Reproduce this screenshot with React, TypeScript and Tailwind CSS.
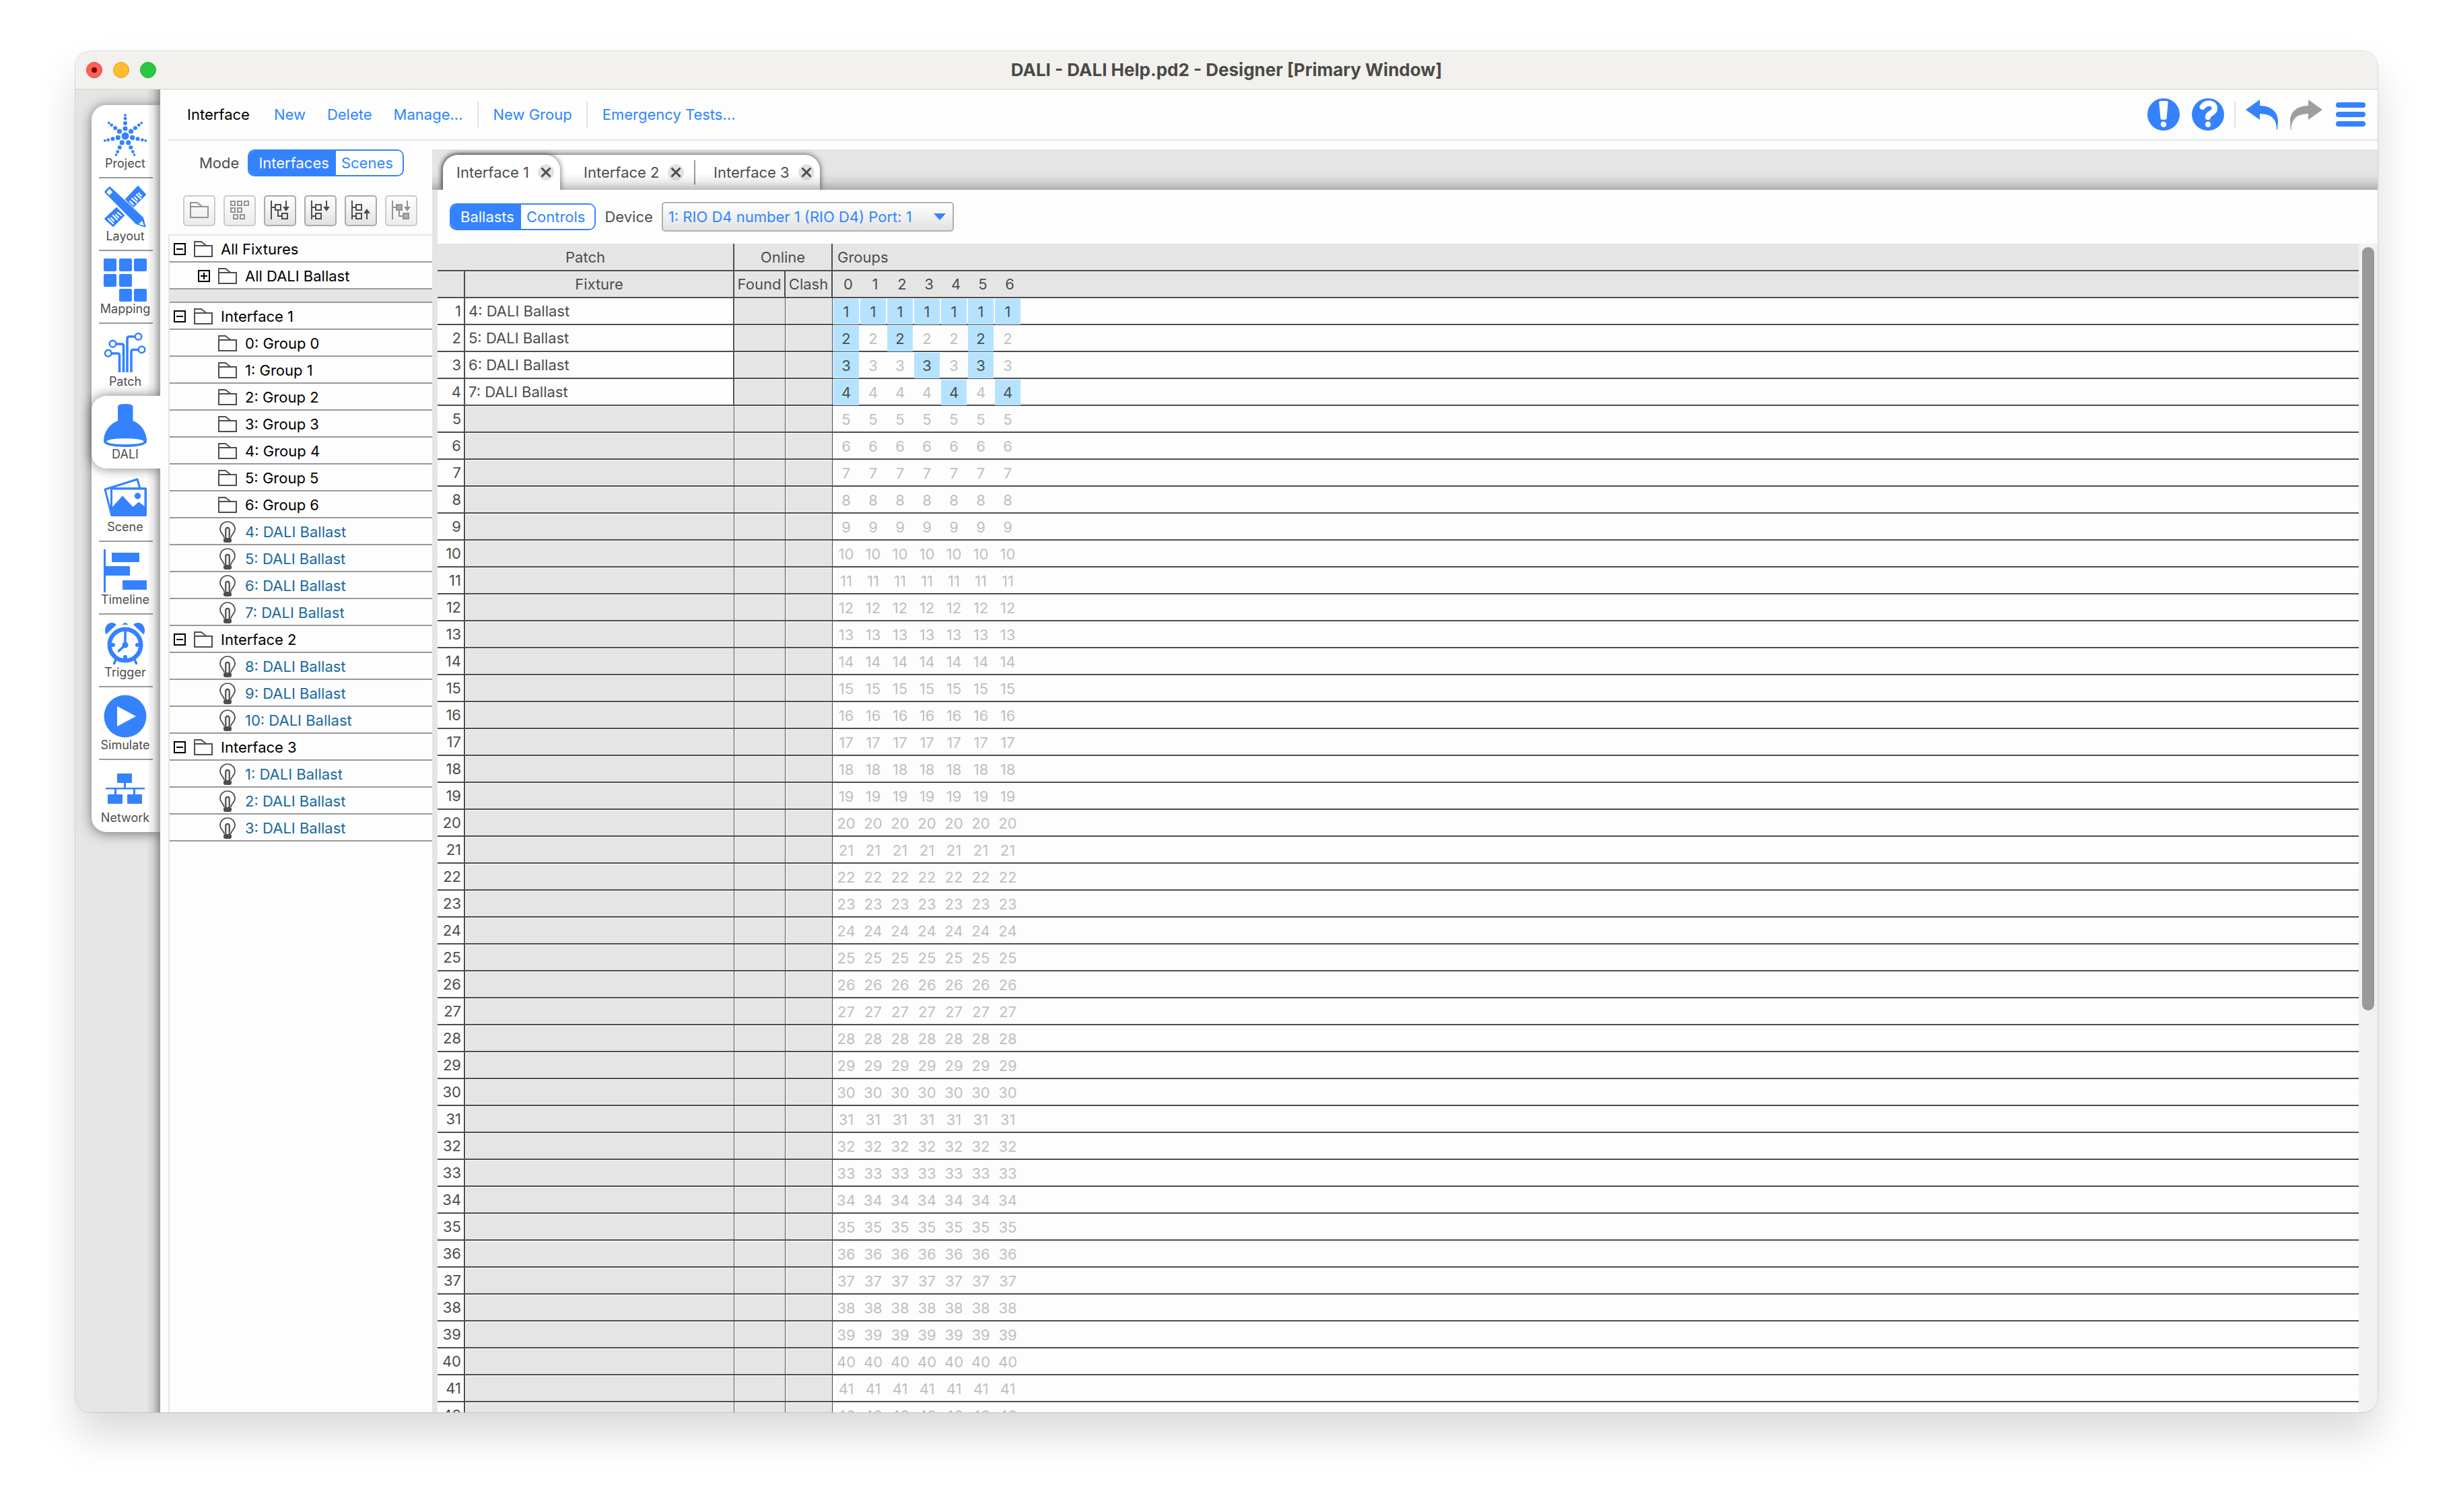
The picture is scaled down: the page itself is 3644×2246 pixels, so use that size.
import type { ReactNode } from "react"

const BLUE = "#3582ff"
const INK = "#4d4d4d"

const STAR_DOTS = [
  { distance: 11, r: 3.6 },
  { distance: 19, r: 3 },
  { distance: 26, r: 2.4 },
  { distance: 31, r: 1.9 },
]

const star = (
  <g fill={BLUE}>
    <circle cx="32" cy="34" r="5.5" />
    {[0, 1, 2, 3, 4, 5, 6].map((arm) =>
      STAR_DOTS.map((dot) => {
        const angle = (arm * 2 * Math.PI) / 7
        return (
          <circle
            key={`${arm}-${dot.distance}`}
            cx={32 + dot.distance * Math.sin(angle)}
            cy={34 - dot.distance * Math.cos(angle)}
            r={dot.r}
          />
        )
      }),
    )}
  </g>
)

const layout = (
  <>
    <g fill={BLUE} stroke={BLUE} strokeWidth="2" strokeLinejoin="round">
      <path d="M51 1L62 13L44 31L33 20Z" />
      <path d="M19 33L30 44L14 60L2 49Z" />
    </g>
    <g stroke="#fff" strokeWidth="2.2" strokeLinecap="round">
      <path d="M39 23L44 28M42 19L49 25M46 17L50 21M49 13L55 19M52 11L56 15" />
      <path d="M7 49L14 56M11 48L15 52M14 44L20 50M18 43L22 47M21 40L26 44" />
    </g>
    <path
      d="M8 1Q9 0 10.500 1.500L59.500 47L63 60.500Q63 62.500 61 62L48 57.500L1.500 10.500Q0 9 1.500 7.500Z"
      fill={BLUE}
      stroke="#fff"
      strokeWidth="1"
    />
    <path d="M9 4.500L13 9.500L8.500 14L4 9.500Z" fill="#fff" />
    <path d="M52 57L57 52L60 59Z" fill="#fff" />
  </>
)

const mapping = (
  <g fill={BLUE}>
    <rect width="19" height="19" rx="2" />
    <rect x="23" width="19" height="19" rx="2" />
    <rect x="45" width="19" height="19" rx="2" />
    <rect y="23" width="19" height="19" rx="2" />
    <rect x="23" y="23" width="19" height="19" rx="2" />
    <rect x="23" y="45" width="19" height="19" rx="2" />
    <rect x="45" y="45" width="19" height="19" rx="2" />
  </g>
)

const patch = (
  <g fill="none" stroke={BLUE} strokeWidth="3.600">
    <circle cx="51.500" cy="8" r="4.800" strokeWidth="2.600" />
    <circle cx="13.500" cy="18.700" r="4.800" strokeWidth="2.600" />
    <circle cx="56.500" cy="27.300" r="4.800" strokeWidth="2.600" />
    <circle cx="6.800" cy="32.700" r="4.800" strokeWidth="2.600" />
    <path d="M18 19H26.500Q29.500 19 29.500 22V61" />
    <path d="M11 33H20.500Q23.500 33 23.500 36V61" />
    <path d="M47 8H38Q35 8 35 11V61" />
    <path d="M52 27.500H44Q41 27.500 41 30.500V61" />
  </g>
)

const dali = (
  <>
    <path
      d="M21 4Q21 0 32 0T43.500 4V25C56 30 64 42 64 56C64 61 50 64 32 64S0 61 0 56C0 42 8 30 21 25Z"
      fill={BLUE}
    />
    <ellipse cx="32" cy="55.700" rx="27.500" ry="4.500" fill="#fff" />
  </>
)

const scene = (
  <>
    <path d="M12 58L2 19L50 4L54 18" fill="none" stroke={BLUE} strokeWidth="3" strokeLinejoin="round" />
    <rect x="10" y="16" width="54" height="43" rx="2" fill={BLUE} />
    <path d="M13 19.500H60.500V44L52 37.500L43.500 45L28 28.500L13 45Z" fill="#fff" />
    <circle cx="50.500" cy="28.700" r="4.700" fill={BLUE} />
  </>
)

const timeline = (
  <g fill={BLUE}>
    <rect width="3" height="64" />
    <rect x="12" y="5" width="41" height="14" />
    <rect x="3" y="25" width="36" height="14" />
    <rect x="28" y="46" width="36" height="14" />
  </g>
)

const trigger = (
  <>
    <circle cx="32" cy="34" r="23.300" fill="none" stroke={BLUE} strokeWidth="6.400" />
    <g fill={BLUE}>
      <path d="M3.500 18.500C-1 10 5 0 13 1Q17 1.500 19 4Z" />
      <path d="M59.500 18.500C64 10 58 0 50 1Q46 1.500 44 4Z" />
      <path d="M27 4.500Q32 -2.500 37 4.500Q32 3 27 4.500Z" />
      <circle cx="32" cy="34" r="4.500" />
      <circle cx="14" cy="34" r="3" />
      <circle cx="50" cy="34" r="3" />
      <circle cx="32" cy="52" r="3" />
    </g>
    <g stroke={BLUE} strokeWidth="3.600" strokeLinecap="round">
      <path d="M32 13V34L22.500 43" fill="none" />
      <path d="M18 56L15.500 61.500M46 56L48.500 61.500" />
    </g>
  </>
)

const simulate = (
  <>
    <circle cx="32" cy="32" r="31.500" fill={BLUE} />
    <path d="M20 17V47L48 32Z" fill="#fff" />
  </>
)

const network = (
  <g fill={BLUE}>
    <rect x="20" y="9" width="22" height="14" rx="1" />
    <rect x="6" y="40" width="22" height="14" rx="1" />
    <rect x="35" y="40" width="22" height="14" rx="1" />
    <path d="M3 30H61V32.500H3ZM30 23H33V31H30ZM16 31H19V41H16ZM44 31H47V41H44Z" />
  </g>
)

const NAV_ITEMS = [
  { label: "Project", icon: star },
  { label: "Layout", icon: layout },
  { label: "Mapping", icon: mapping },
  { label: "Patch", icon: patch },
  { label: "DALI", icon: dali },
  { label: "Scene", icon: scene },
  { label: "Timeline", icon: timeline },
  { label: "Trigger", icon: trigger },
  { label: "Simulate", icon: simulate },
  { label: "Network", icon: network },
]

type TreeItem = { label: string; level: 0 | 1; kind: "folder" | "ballast"; toggle?: "open" | "closed" }

const group = (label: string): TreeItem => ({ label, level: 1, kind: "folder" })
const ballast = (n: number): TreeItem => ({ label: `${n}: DALI Ballast`, level: 1, kind: "ballast" })
const iface = (n: number): TreeItem => ({ label: `Interface ${n}`, level: 0, kind: "folder", toggle: "open" })

const FIXTURES: TreeItem[] = [
  { label: "All Fixtures", level: 0, kind: "folder", toggle: "open" },
  { label: "All DALI Ballast", level: 1, kind: "folder", toggle: "closed" },
]

const INTERFACES: TreeItem[] = [
  iface(1),
  ...[0, 1, 2, 3, 4, 5, 6].map((n) => group(`${n}: Group ${n}`)),
  ...[4, 5, 6, 7].map(ballast),
  iface(2),
  ...[8, 9, 10].map(ballast),
  iface(3),
  ...[1, 2, 3].map(ballast),
]

const GROUPS = [0, 1, 2, 3, 4, 5, 6]
const ROWS = Array.from({ length: 42 }, (_, i) => i + 1)
const PATCHED: Record<number, { fixture: string; groups: number[] }> = {
  1: { fixture: "4: DALI Ballast", groups: [0, 1, 2, 3, 4, 5, 6] },
  2: { fixture: "5: DALI Ballast", groups: [0, 2, 5] },
  3: { fixture: "6: DALI Ballast", groups: [0, 3, 5] },
  4: { fixture: "7: DALI Ballast", groups: [0, 4, 6] },
}

function FolderIcon() {
  return (
    <svg width="28" height="24" viewBox="0 0 28 24" fill="none" stroke={INK} className="shrink-0">
      <rect x="1" y="7" width="26" height="16" strokeWidth="2" />
      <path d="M1 7V1H11L18.500 7" strokeWidth="1.800" />
    </svg>
  )
}

function BulbIcon() {
  return (
    <svg width="28" height="32" viewBox="-2 0 28 32" fill="none" stroke={INK} strokeWidth="1.700" className="shrink-0">
      <path d="M7 25C7 20 1 18 1 12A11 11 0 0 1 23 12C23 18 17 20 17 25" />
      <path d="M9.300 26V12.500A2.700 2.700 0 0 1 14.700 12.500V26" strokeWidth="2.200" />
      <rect x="6" y="25" width="12" height="7" rx="3" fill={INK} stroke="none" />
    </svg>
  )
}

function Toggle({ state }: { state: "open" | "closed" }) {
  return (
    <svg width="18" height="18" viewBox="0 0 18 18" fill="none" stroke="#000" strokeWidth="2" className="shrink-0">
      <rect x="1" y="1" width="16" height="16" />
      <path d={state === "open" ? "M4 9H14" : "M4 9H14M9 4V14"} />
    </svg>
  )
}

function TreeRow({ item }: { item: TreeItem }) {
  return (
    <li>
      <button
        className={`flex h-10 w-full items-center gap-3 border-b-2 border-[#999] pt-px text-left ${
          item.level === 0 ? "pl-1.5" : item.toggle ? "pl-[42px]" : "pl-[72px]"
        } ${item.kind === "ballast" ? "text-[#1a6aa1]" : "text-black"}`}
      >
        {item.toggle && <Toggle state={item.toggle} />}
        {item.kind === "ballast" ? <BulbIcon /> : <FolderIcon />}
        <span>{item.label}</span>
      </button>
    </li>
  )
}

function ToolButton({ label, disabled, children }: { label: string; disabled?: boolean; children: ReactNode }) {
  return (
    <button
      aria-label={label}
      disabled={disabled}
      className="h-[46px] w-12 rounded-[5px] border-2 border-[#aaa] bg-linear-to-b from-white to-[#e2e2e2] disabled:opacity-60"
    >
      <svg width="44" height="42" viewBox="2 2 44 42" fill="none" stroke={INK} strokeWidth="2">
        {children}
      </svg>
    </button>
  )
}

function Segmented({ name, options }: { name: string; options: [string, string] }) {
  return (
    <div role="group" aria-label={name} className="flex h-10 overflow-hidden rounded-[10px] border-2 border-[#3582ff]">
      <button aria-pressed="true" className="bg-[#3582ff] pr-2.5 pl-3.5 text-white">
        {options[0]}
      </button>
      <button aria-pressed="false" className="bg-white pr-3.5 pl-2 text-[#2f86ff]">
        {options[1]}
      </button>
    </div>
  )
}

function CloseButton({ name }: { name: string }) {
  return (
    <button aria-label={`Close ${name}`} className="size-6 rounded-full bg-[#e2e2e2]">
      <svg width="24" height="24" viewBox="0 0 24 24" stroke={INK} strokeWidth="3">
        <path d="M5.500 5.500L18.500 18.500M18.500 5.500L5.500 18.500" />
      </svg>
    </button>
  )
}

function TitleBar() {
  return (
    <header className="relative flex h-[57px] shrink-0 items-center gap-4 border-b border-[#d2d2d0] bg-[#f2f1ee] px-4">
      <button aria-label="Close window" className="size-6 rounded-full border border-[#e0463f] bg-[#fe5f57] p-[7px]">
        <span className="block size-2 rounded-full bg-[#720a05]" />
      </button>
      <button aria-label="Minimise window" className="size-6 rounded-full border border-[#dfa023] bg-[#febc2e]" />
      <button aria-label="Zoom window" className="size-6 rounded-full border border-[#1dad2b] bg-[#28c840]" />
      <h1 className="pointer-events-none absolute inset-x-0 text-center text-[26px] font-bold text-[#4a4a48]">
        DALI - DALI Help.pd2 - Designer [Primary Window]
      </h1>
    </header>
  )
}

function SideNav() {
  return (
    <aside className="relative w-[126px] shrink-0 overflow-hidden bg-[#e5e5e5] pt-[23px] pl-6">
      <nav className="rounded-l-[22px] bg-white shadow-[0_2px_18px_rgba(0,0,0,0.5)]">
        {NAV_ITEMS.map((item, index) => {
          const active = item.label === "DALI"
          const ruled = !active && item.label !== "Patch" && index < NAV_ITEMS.length - 1
          return (
            <a
              key={item.label}
              href={`#${item.label.toLowerCase()}`}
              className={`relative flex h-[108px] flex-col items-center pt-3 pr-0.5 text-[18px] leading-[22px] text-[#4d4d4d] ${
                active ? "z-10 rounded-l-[22px] bg-white shadow-[0_0_18px_rgba(0,0,0,0.5)]" : ""
              }`}
            >
              <svg width="64" height="64" viewBox="0 0 64 64">
                {item.icon}
              </svg>
              {item.label}
              {ruled && <span className="mt-auto -mb-px ml-0.5 h-0.5 w-20 shrink-0 bg-[#999]" />}
            </a>
          )
        })}
      </nav>
      {/* shade cast by the main panel */}
      <div className="pointer-events-none absolute inset-y-0 right-0 w-5 bg-linear-to-l from-black/35 via-black/10 to-transparent" />
    </aside>
  )
}

function Toolbar() {
  return (
    <div className="ml-3 flex h-19 shrink-0 items-center border-b-2 border-[#e5e5e5] pr-[18px] pl-7 text-[#2f86ff]">
      <h2 className="mr-9 text-black">Interface</h2>
      <button className="mr-8">New</button>
      <button className="mr-8">Delete</button>
      <button>Manage...</button>
      <span className="mr-[22px] ml-[21px] h-[38px] w-0.5 bg-[#e2e2e2]" />
      <button>New Group</button>
      <span className="mr-[22px] ml-[21px] h-[38px] w-0.5 bg-[#e2e2e2]" />
      <button>Emergency Tests...</button>
      <div className="ml-auto flex items-center">
        <button aria-label="Issues" className="mr-[18px]">
          <svg width="48" height="48" viewBox="0 0 48 48">
            <circle cx="24" cy="24" r="24" fill={BLUE} />
            <path
              d="M19.500 4H28.500Q31 4 30.700 6.500L28.500 30Q28.300 31.700 26.500 31.700H21.500Q19.700 31.700 19.500 30L17.300 6.500Q17 4 19.500 4Z"
              fill="#fff"
            />
            <circle cx="24" cy="38.700" r="4.200" fill="#fff" />
          </svg>
        </button>
        <button aria-label="Help" className="mr-[15px]">
          <svg width="48" height="48" viewBox="0 0 48 48">
            <circle cx="24" cy="24" r="24" fill={BLUE} />
            <path
              d="M15.800 12.800C21 5 34 5.500 33.800 15.500C33.600 23 24 21.500 24 28"
              fill="none"
              stroke="#fff"
              strokeWidth="8.500"
              strokeLinecap="round"
            />
            <circle cx="24" cy="38.700" r="4.200" fill="#fff" />
          </svg>
        </button>
        <span className="mr-[15px] h-[38px] w-0.5 bg-[#e2e2e2]" />
        <button aria-label="Undo" className="mr-[18px]">
          <svg width="48" height="48" viewBox="0 0 48 48" fill={BLUE}>
            <path d="M0 17L21 2V11C38 11.500 48 20 48 34L47.200 47H46.200C46 29 37 23.500 21 23V32Z" />
          </svg>
        </button>
        <button aria-label="Redo" disabled className="mr-5">
          <svg width="48" height="48" viewBox="0 0 48 48" fill="#9e9e9e">
            <path d="M48 17L27 2V11C10 11.500 0 20 0 34L0.800 47H1.800C2 29 11 23.500 27 23V32Z" />
          </svg>
        </button>
        <button aria-label="Menu">
          <svg width="44" height="36" viewBox="0 0 44 36" fill={BLUE}>
            <rect width="44" height="8" rx="4" />
            <rect y="14" width="44" height="8" rx="4" />
            <rect y="28" width="44" height="8" rx="4" />
          </svg>
        </button>
      </div>
    </div>
  )
}

function BrowserPanel() {
  return (
    <section className="ml-3 flex w-[392px] shrink-0 flex-col">
      <div className="mt-[13px] flex items-center gap-[13px] pl-[46px] text-[#4d4d4d]">
        <span>Mode</span>
        <Segmented name="Mode" options={["Interfaces", "Scenes"]} />
      </div>
      <div className="mt-7 mb-3 flex gap-3 pl-[22px]">
        <ToolButton label="New folder" disabled>
          <rect x="11" y="17" width="26" height="16" />
          <path d="M11 17V11H21L28.500 17" />
        </ToolButton>
        <ToolButton label="Arrange" disabled>
          <path d="M11 9h6v6h-6zM21 9h6v6h-6zM31 9h6v6h-6zM11 19h6v6h-6zM21 19h6v6h-6zM15 29h6v6h-6zM25 29h6v6h-6z" />
        </ToolButton>
        <ToolButton label="Expand tree">
          <path d="M11 8V36M11 18H17M17 14h8v8h-8zM21 22V31H27M27 27h8v8h-8zM33 8V20" />
          <path d="M28 17H38L33 24Z" fill={INK} stroke="none" />
        </ToolButton>
        <ToolButton label="Expand level">
          <path d="M11 8V36M11 18H17M17 14h8v8h-8zM11 31H17M17 27h8v8h-8zM33 8V20" />
          <path d="M28 17H38L33 24Z" fill={INK} stroke="none" />
        </ToolButton>
        <ToolButton label="Collapse level">
          <path d="M11 8V36M11 18H17M17 14h8v8h-8zM11 31H17M17 27h8v8h-8zM33 36V24" />
          <path d="M28 27H38L33 20Z" fill={INK} stroke="none" />
        </ToolButton>
        <ToolButton label="Expand selection" disabled>
          <path d="M11 8V36M11 18H17M21 22V31H27M33 8V20" />
          <path d="M17 14h8v8h-8zM27 27h8v8h-8z" fill="#777" />
          <path d="M28 17H38L33 24Z" fill={INK} stroke="none" />
        </ToolButton>
      </div>
      <div className="flex-1 border-t-2 border-l-2 border-[#e5e5e5]">
        <ul>
          {FIXTURES.map((item) => (
            <TreeRow key={item.label} item={item} />
          ))}
        </ul>
        <div className="h-5 border-b-2 border-[#999] bg-[#e5e5e5]" />
        <ul>
          {INTERFACES.map((item) => (
            <TreeRow key={item.label} item={item} />
          ))}
        </ul>
      </div>
    </section>
  )
}

function TabStrip() {
  return (
    <div className="relative h-15 shrink-0 overflow-hidden bg-[#e5e5e5] pt-2 pl-4 text-[#4d4d4d]">
      <div
        role="tablist"
        className="flex h-[52px] w-[560px] items-center rounded-t-[22px] bg-white shadow-[0_0_8px_rgba(0,0,0,0.7)]"
      >
        <div className="relative z-10 flex h-full w-[174px] items-center gap-[13px] rounded-t-[22px] bg-white pl-5 shadow-[0_0_8px_rgba(0,0,0,0.6)]">
          <button role="tab" aria-selected="true">
            Interface 1
          </button>
          <CloseButton name="Interface 1" />
        </div>
        <div className="flex w-[202px] items-center gap-3 pl-[35px]">
          <button role="tab" aria-selected="false">
            Interface 2
          </button>
          <CloseButton name="Interface 2" />
        </div>
        <div className="-ml-[3px] flex h-9 items-center gap-[13px] border-l-2 border-[#999] pl-[27px]">
          <button role="tab" aria-selected="false">
            Interface 3
          </button>
          <CloseButton name="Interface 3" />
        </div>
      </div>
      {/* shade along the foot of the strip, the open tab stays above it */}
      <div className="pointer-events-none absolute inset-x-0 bottom-0 h-6 bg-linear-to-t from-black/25 via-black/8 to-transparent" />
    </div>
  )
}

function PatchTable() {
  return (
    <table className="w-full table-fixed border-separate border-spacing-0 text-[#4d4d4d]">
      <colgroup>
        <col className="w-[41px]" />
        <col className="w-[400px]" />
        <col className="w-[76px]" />
        <col className="w-[70px]" />
        {GROUPS.map((n) => (
          <col key={n} className="w-10" />
        ))}
        <col />
      </colgroup>
      <thead className="bg-[#e5e5e5] [&_th]:border-b-2 [&_th]:border-[#4d4d4d] [&_th]:p-0 [&_th]:font-normal">
        <tr className="h-[41px]">
          <th colSpan={2} className="border-r-2">
            Patch
          </th>
          <th colSpan={2} className="border-r-2">
            Online
          </th>
          <th colSpan={8} className="text-left">
            <span className="pl-[7px]">Groups</span>
          </th>
        </tr>
        <tr className="h-10">
          <th className="border-r-2" />
          <th className="border-r-2">Fixture</th>
          <th className="border-r-2">Found</th>
          <th className="border-r-2">Clash</th>
          {GROUPS.map((n) => (
            <th key={n}>
              <span className="pl-1.5">{n}</span>
            </th>
          ))}
          <th />
        </tr>
      </thead>
      <tbody className="[&_td]:border-b-2 [&_td]:border-[#4d4d4d] [&_td]:p-0">
        {ROWS.map((n) => {
          const row = PATCHED[n]
          return (
            <tr key={n} className="h-10">
              <td className="border-r-2 text-right">
                <span className="pr-1">{n}</span>
              </td>
              <td className={row ? "border-r-2" : "border-r bg-[#e5e5e5] shadow-[inset_1px_1px_0_#fff]"}>
                <span className="pl-[5px]">{row?.fixture}</span>
              </td>
              <td className="border-r bg-[#e5e5e5] shadow-[inset_1px_1px_0_#fff]" />
              <td className="border-r bg-[#e5e5e5] shadow-[inset_1px_1px_0_#fff]" />
              {GROUPS.map((g) => (
                <td key={g} className="text-center">
                  <button
                    className={`relative mx-px -mb-px block h-[38px] w-[38px] ${
                      row?.groups.includes(g) ? "bg-[#b5e3ff]" : "text-[#bfbfbf]"
                    }`}
                  >
                    {n}
                  </button>
                </td>
              ))}
              <td />
            </tr>
          )
        })}
      </tbody>
    </table>
  )
}

function Editor() {
  return (
    <section className="mt-[13px] flex min-w-0 flex-1 flex-col">
      <TabStrip />
      <div className="flex min-h-0 flex-1 flex-col border-l-8 border-[#e5e5e5]">
        <div className="flex h-20 shrink-0 items-center gap-[13px] pl-[18px] text-[#4d4d4d]">
          <Segmented name="View" options={["Ballasts", "Controls"]} />
          <label htmlFor="device">Device</label>
          <div className="relative">
            <select
              id="device"
              className="h-11 w-[434px] appearance-none rounded-[5px] border-2 border-[#b0b0b0] bg-linear-to-b from-white to-[#e2e2e2] pl-2 text-[#2f86ff]"
            >
              <option>1: RIO D4 number 1 (RIO D4) Port: 1</option>
            </select>
            <svg
              width="18"
              height="10"
              viewBox="0 0 18 10"
              fill={BLUE}
              className="pointer-events-none absolute top-[17px] right-3"
            >
              <path d="M0 0H18L9 10Z" />
            </svg>
          </div>
        </div>
        <div className="flex min-h-0 flex-1">
          <div className="min-w-0 flex-1 overflow-hidden">
            <PatchTable />
          </div>
          <div className="w-7 shrink-0 bg-[#f1f1f1] px-[5px] pt-[5px]">
            <div className="h-19/29 rounded-full bg-[#999]" />
          </div>
        </div>
      </div>
    </section>
  )
}

export default function App() {
  return (
    <div className="h-screen overflow-hidden bg-white px-28 pt-19 pb-37 font-['Inter',sans-serif] text-[22px] leading-7">
      <div className="flex h-full flex-col overflow-hidden rounded-[22px] bg-[#fdfdfd] shadow-[0_0_0_1px_rgba(0,0,0,0.12),0_34px_60px_rgba(0,0,0,0.15)]">
        <TitleBar />
        <div className="flex min-h-0 flex-1">
          <SideNav />
          <main className="flex min-w-0 flex-1 flex-col">
            <Toolbar />
            <div className="flex min-h-0 flex-1">
              <BrowserPanel />
              <Editor />
            </div>
          </main>
        </div>
      </div>
    </div>
  )
}
